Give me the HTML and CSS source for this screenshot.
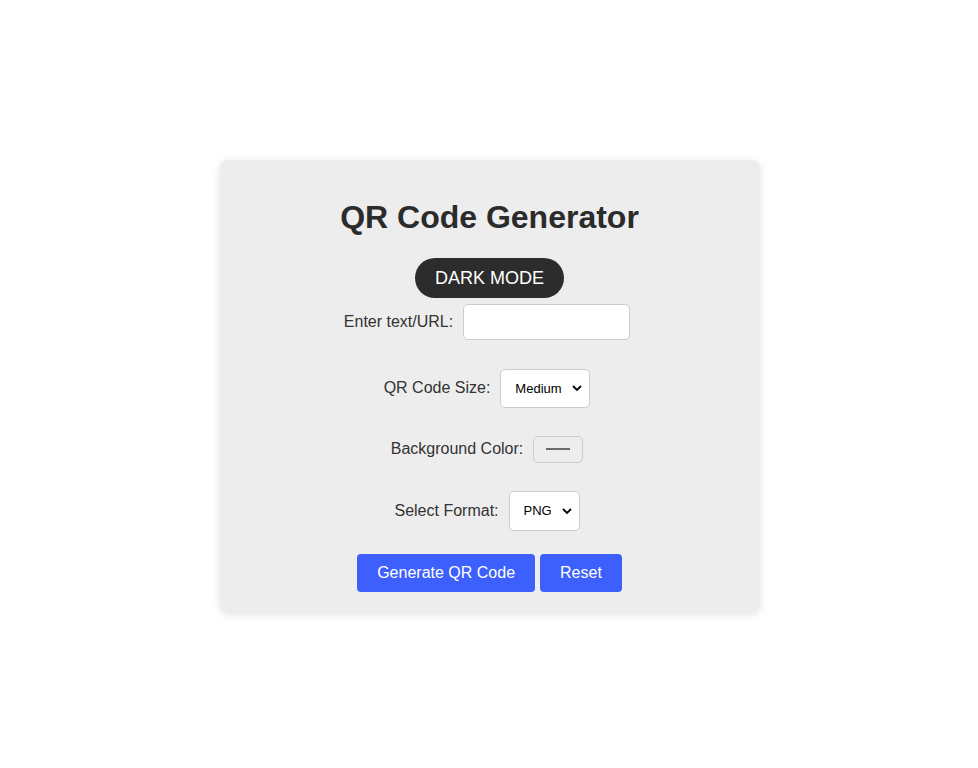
FILE: index.html
```html
<!DOCTYPE html>
<html lang="en">
<head>
    <meta charset="UTF-8">
    <meta name="viewport" content="width=device-width, initial-scale=1.0">
    <title>QR Code Generator</title>
    <link rel="stylesheet" href="styles.css">
</head>
<body>
    <div class="container">
        <h1>QR Code Generator</h1>
        <button class="mode-toggle">DARK MODE</button>

        <div class="form-group first">
            <label for="text">Enter text/URL:</label>
            <input type="text" id="text" class="text-input">
        </div>

        <div class="form-group">
            <label for="size">QR Code Size:</label>
            <select id="size" class="size-select">
                <option>Small</option>
                <option selected>Medium</option>
                <option>Large</option>
            </select>
        </div>

        <div class="form-group">
            <label>Background Color:</label>
            <span class="color-picker"><span class="swatch"></span></span>
        </div>

        <div class="form-group last">
            <label for="format">Select Format:</label>
            <select id="format" class="format-select">
                <option selected>PNG</option>
                <option>JPG</option>
                <option>SVG</option>
            </select>
        </div>

        <div class="button-container">
            <button class="action">Generate QR Code</button>
            <button class="action">Reset</button>
        </div>
    </div>
</body>
</html>
```

FILE: styles.css
```css
body {
    font-family: "Liberation Sans", Arial, sans-serif;
    background-color: #fff;
    color: #333;
    margin: 0;
    height: 100vh;
    display: flex;
    justify-content: center;
    align-items: center;
}
.container {
    width: 500px;
    padding: 20px;
    background-color: #ededed;
    border-radius: 8px;
    box-shadow: 0 2px 8px rgba(0, 0, 0, 0.12);
    text-align: center;
    margin: 3px 0 0 1px;
}
h1 {
    font-size: 32px;
    color: #2b2b2b;
    margin: 19px 0 22px;
}
.mode-toggle {
    font-family: inherit;
    font-size: 18px;
    padding: 10px 20px;
    border: none;
    border-radius: 20px;
    background-color: #2c2c2c;
    color: #fff;
    height: 40px;
    line-height: 20px;
}
.form-group {
    display: flex;
    justify-content: center;
    align-items: center;
    margin-bottom: 28px;
    font-size: 16px;
}
.form-group.first {
    margin-top: 6px;
    margin-bottom: 29px;
}
.form-group.last {
    margin-bottom: 23px;
}
.form-group label {
    margin-right: 5px;
}
.text-input, select, .color-picker {
    margin: 0 5px;
    box-sizing: border-box;
    border: 1px solid #ccc;
    border-radius: 5px;
    background-color: #fff;
}
.text-input {
    width: 167px;
    height: 36px;
    padding: 8px;
    font-size: 16px;
}
select {
    font-family: inherit;
    font-size: 13px;
    color: #000;
    padding: 0 8px 0 14px;
    -webkit-appearance: none;
    appearance: none;
    background-image: url("data:image/svg+xml,%3Csvg xmlns='http://www.w3.org/2000/svg' width='10' height='6' viewBox='0 0 10 6'%3E%3Cpath d='M1 1l4 4 4-4' fill='none' stroke='%23000' stroke-width='1.8'/%3E%3C/svg%3E");
    background-repeat: no-repeat;
    background-position: right 7px center;
}
.size-select {
    width: 90px;
    height: 39px;
}
.format-select {
    width: 71px;
    height: 40px;
}
.color-picker {
    display: inline-flex;
    justify-content: center;
    align-items: center;
    width: 50px;
    height: 27px;
    background-color: #ededed;
}
.swatch {
    width: 24px;
    height: 2px;
    background-color: #6b6b6b;
}
.button-container {
    display: flex;
    justify-content: center;
    gap: 5px;
}
.action {
    font-family: inherit;
    font-size: 16px;
    padding: 10px 20px;
    height: 38px;
    line-height: 18px;
    border: none;
    border-radius: 4px;
    background-color: #3d5ffb;
    color: #fff;
    cursor: pointer;
}
```
